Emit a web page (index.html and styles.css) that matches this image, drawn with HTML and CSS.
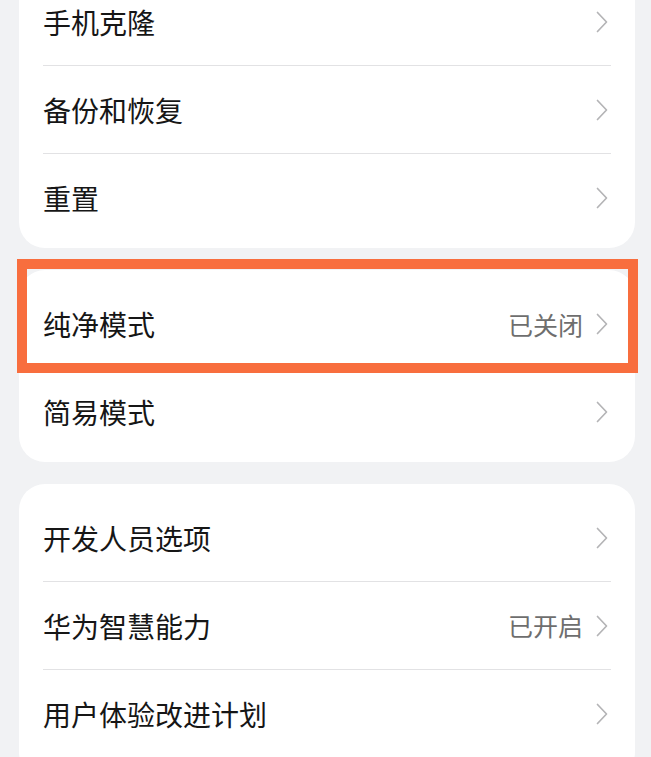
FILE: index.html
```html
<!DOCTYPE html>
<html lang="zh-CN">
<head>
<meta charset="utf-8">
<title>设置</title>
<link rel="stylesheet" href="styles.css">
</head>
<body>
<main class="page">
  <section class="card card-first">
    <div class="row divided"><span class="label">手机克隆</span><span class="trail"><svg class="chev" viewBox="0 0 12 22"><polyline points="1.5,1.5 10.5,11 1.5,20.5"/></svg></span></div>
    <div class="row divided"><span class="label">备份和恢复</span><span class="trail"><svg class="chev" viewBox="0 0 12 22"><polyline points="1.5,1.5 10.5,11 1.5,20.5"/></svg></span></div>
    <div class="row"><span class="label">重置</span><span class="trail"><svg class="chev" viewBox="0 0 12 22"><polyline points="1.5,1.5 10.5,11 1.5,20.5"/></svg></span></div>
  </section>

  <section class="card">
    <div class="row highlighted"><span class="label">纯净模式</span><span class="trail"><span class="status">已关闭</span><svg class="chev" viewBox="0 0 12 22"><polyline points="1.5,1.5 10.5,11 1.5,20.5"/></svg></span><span class="highlight-box"></span></div>
    <div class="row"><span class="label">简易模式</span><span class="trail"><svg class="chev" viewBox="0 0 12 22"><polyline points="1.5,1.5 10.5,11 1.5,20.5"/></svg></span></div>
  </section>

  <section class="card card-continued">
    <div class="row divided"><span class="label">开发人员选项</span><span class="trail"><svg class="chev" viewBox="0 0 12 22"><polyline points="1.5,1.5 10.5,11 1.5,20.5"/></svg></span></div>
    <div class="row divided"><span class="label">华为智慧能力</span><span class="trail"><span class="status">已开启</span><svg class="chev" viewBox="0 0 12 22"><polyline points="1.5,1.5 10.5,11 1.5,20.5"/></svg></span></div>
    <div class="row divided"><span class="label">用户体验改进计划</span><span class="trail"><svg class="chev" viewBox="0 0 12 22"><polyline points="1.5,1.5 10.5,11 1.5,20.5"/></svg></span></div>
  </section>
</main>
</body>
</html>
```

FILE: styles.css
```css
html, body {
  margin: 0;
  padding: 0;
  background: #f1f2f4;
}

body {
  font-family: "Noto Sans CJK SC", "Noto Sans", sans-serif;
  color: #161616;
  overflow: hidden;
  height: 757px;
}

.page {
  display: flex;
  flex-direction: column;
  gap: 22px;
  padding: 0 16px 0 19px;
}

.card {
  background: #ffffff;
  border-radius: 26px;
  padding: 10px 24px 6px;
}

.card-first {
  margin-top: -32px;
}

.card-continued {
  padding-bottom: 20px;
}

.row {
  position: relative;
  height: 88px;
  display: flex;
  align-items: center;
  justify-content: space-between;
  box-sizing: border-box;
}

.row.divided {
  border-bottom: 1px solid #e2e2e4;
}

.label {
  font-size: 28px;
  font-weight: 400;
  line-height: 1;
}

.trail {
  display: flex;
  align-items: center;
  gap: 13px;
  margin-right: 3px;
}

.status {
  font-size: 25px;
  line-height: 1;
  color: #6e6e6e;
}

.chev {
  width: 12px;
  height: 22px;
  fill: none;
  stroke: #b4b4b6;
  stroke-width: 1.7;
  stroke-linecap: round;
  stroke-linejoin: round;
}

.highlight-box {
  position: absolute;
  top: -21px;
  bottom: -5px;
  left: -26px;
  right: -27px;
  border: 10px solid #f86e3e;
  pointer-events: none;
}
```
